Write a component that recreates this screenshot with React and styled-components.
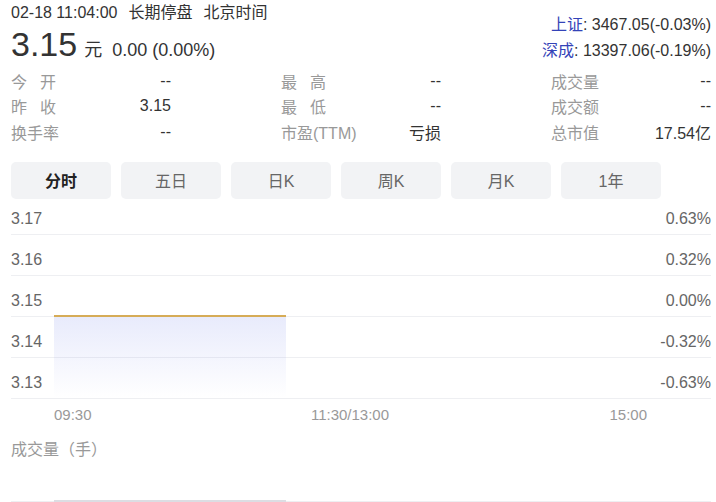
import React from "react";
import styled, { createGlobalStyle } from "styled-components";

const GlobalStyle = createGlobalStyle`
  body {
    margin: 0;
    background: #fff;
    font-family: "Liberation Sans", "Noto Sans CJK SC", sans-serif;
    font-size: 16px;
    color: #333;
  }
`;

const Page = styled.div`
  width: 700px;
  padding-left: 11px;
`;

const Header = styled.div`
  display: flex;
  justify-content: space-between;
  align-items: flex-start;
`;

const TimeLine = styled.div`
  padding-top: 2px;
  line-height: 22px;
  color: #333;
  span + span {
    margin-left: 11px;
  }
`;

const PriceLine = styled.div`
  display: flex;
  align-items: baseline;
  height: 44px;
  line-height: 40px;
`;

const Price = styled.span`
  font-size: 34px;
  color: #333;
`;

const Unit = styled.span`
  font-size: 18px;
  margin-left: 7px;
`;

const Change = styled.span`
  font-size: 18px;
  margin-left: 10px;
`;

const IndexList = styled.div`
  padding-top: 12px;
  text-align: right;
  line-height: 26px;
`;

const IndexName = styled.span`
  color: #3443b8;
`;

const Stats = styled.div`
  display: grid;
  grid-template-columns: repeat(3, 160px);
  justify-content: space-between;
`;

const Stat = styled.div`
  display: flex;
  align-items: center;
  height: 25.5px;
`;

const StatLabel = styled.span`
  width: ${(p) => (p.$spread ? "45px" : "auto")};
  text-align-last: ${(p) => (p.$spread ? "justify" : "auto")};
  color: #999;
  white-space: nowrap;
`;

const StatValue = styled.span`
  flex: 1;
  text-align: right;
  color: #333;
`;

const Tabs = styled.div`
  display: flex;
  gap: 10px;
  margin-top: 17px;
`;

const Tab = styled.div`
  width: 100px;
  height: 37px;
  display: flex;
  align-items: center;
  justify-content: center;
  border-radius: 5px;
  background: #f2f3f5;
  color: ${(p) => (p.$active ? "#222" : "#666")};
  font-weight: ${(p) => (p.$active ? 700 : 400)};
`;

const Chart = styled.div`
  position: relative;
`;

const GridRow = styled.div`
  display: flex;
  justify-content: space-between;
  align-items: flex-end;
  height: ${(p) => (p.$first ? "36px" : "41px")};
  box-sizing: border-box;
  padding-bottom: 5px;
  border-bottom: 1px solid #eeeff2;
  line-height: 20px;
  color: #666;
`;

const Plot = styled.svg`
  position: absolute;
  left: 0;
  top: 0;
  pointer-events: none;
`;

const TimeAxis = styled.div`
  position: relative;
  height: 32px;
  line-height: 32px;
  color: #999;
  font-size: 15px;
`;

const TimeMark = styled.span`
  position: absolute;
  top: 0;
  left: ${(p) => p.$x}px;
  transform: translateX(${(p) => p.$shift});
`;

const VolumeTitle = styled.div`
  line-height: 22px;
  padding-top: 8px;
  color: #999;
`;

const VolumeArea = styled.div`
  position: relative;
  height: 40px;
  border-bottom: 1px solid #eeeff2;
`;

const VolumeBar = styled.div`
  position: absolute;
  left: 43px;
  bottom: -1px;
  width: 232px;
  height: 2px;
  background: #dcdde3;
`;

const stats = [
  [{ label: "今开", value: "--", spread: true }, { label: "最高", value: "--", spread: true }, { label: "成交量", value: "--" }],
  [{ label: "昨收", value: "3.15", spread: true }, { label: "最低", value: "--", spread: true }, { label: "成交额", value: "--" }],
  [{ label: "换手率", value: "--" }, { label: "市盈(TTM)", value: "亏损" }, { label: "总市值", value: "17.54亿" }],
];

const tabs = ["分时", "五日", "日K", "周K", "月K", "1年"];

const levels = [
  ["3.17", "0.63%"],
  ["3.16", "0.32%"],
  ["3.15", "0.00%"],
  ["3.14", "-0.32%"],
  ["3.13", "-0.63%"],
];

export default function App() {
  return (
    <Page>
      <GlobalStyle />
      <Header>
        <div>
          <TimeLine>
            <span>02-18 11:04:00</span>
            <span>长期停盘</span>
            <span>北京时间</span>
          </TimeLine>
          <PriceLine>
            <Price>3.15</Price>
            <Unit>元</Unit>
            <Change>0.00 (0.00%)</Change>
          </PriceLine>
        </div>
        <IndexList>
          <div>
            <IndexName>上证</IndexName>: 3467.05(-0.03%)
          </div>
          <div>
            <IndexName>深成</IndexName>: 13397.06(-0.19%)
          </div>
        </IndexList>
      </Header>

      <Stats>
        {stats.flat().map((s) => (
          <Stat key={s.label}>
            <StatLabel $spread={s.spread}>{s.label}</StatLabel>
            <StatValue>{s.value}</StatValue>
          </Stat>
        ))}
      </Stats>

      <Tabs>
        {tabs.map((t, i) => (
          <Tab key={t} $active={i === 0}>
            {t}
          </Tab>
        ))}
      </Tabs>

      <Chart>
        {levels.map(([price, pct], i) => (
          <GridRow key={price} $first={i === 0}>
            <span>{price}</span>
            <span>{pct}</span>
          </GridRow>
        ))}
        <Plot width="700" height="200" viewBox="0 0 700 200">
          <defs>
            <linearGradient id="area" x1="0" y1="0" x2="0" y2="1">
              <stop offset="0" stopColor="#5b6ee6" stopOpacity="0.14" />
              <stop offset="1" stopColor="#5b6ee6" stopOpacity="0" />
            </linearGradient>
          </defs>
          <rect x="43" y="117" width="232" height="82" fill="url(#area)" />
          <line x1="43" y1="117" x2="275" y2="117" stroke="#d6ac57" strokeWidth="2" />
        </Plot>
      </Chart>

      <TimeAxis>
        <TimeMark $x={43} $shift="0">09:30</TimeMark>
        <TimeMark $x={339} $shift="-50%">11:30/13:00</TimeMark>
        <TimeMark $x={636} $shift="-100%">15:00</TimeMark>
      </TimeAxis>

      <VolumeTitle>成交量（手）</VolumeTitle>
      <VolumeArea>
        <VolumeBar />
      </VolumeArea>
    </Page>
  );
}
